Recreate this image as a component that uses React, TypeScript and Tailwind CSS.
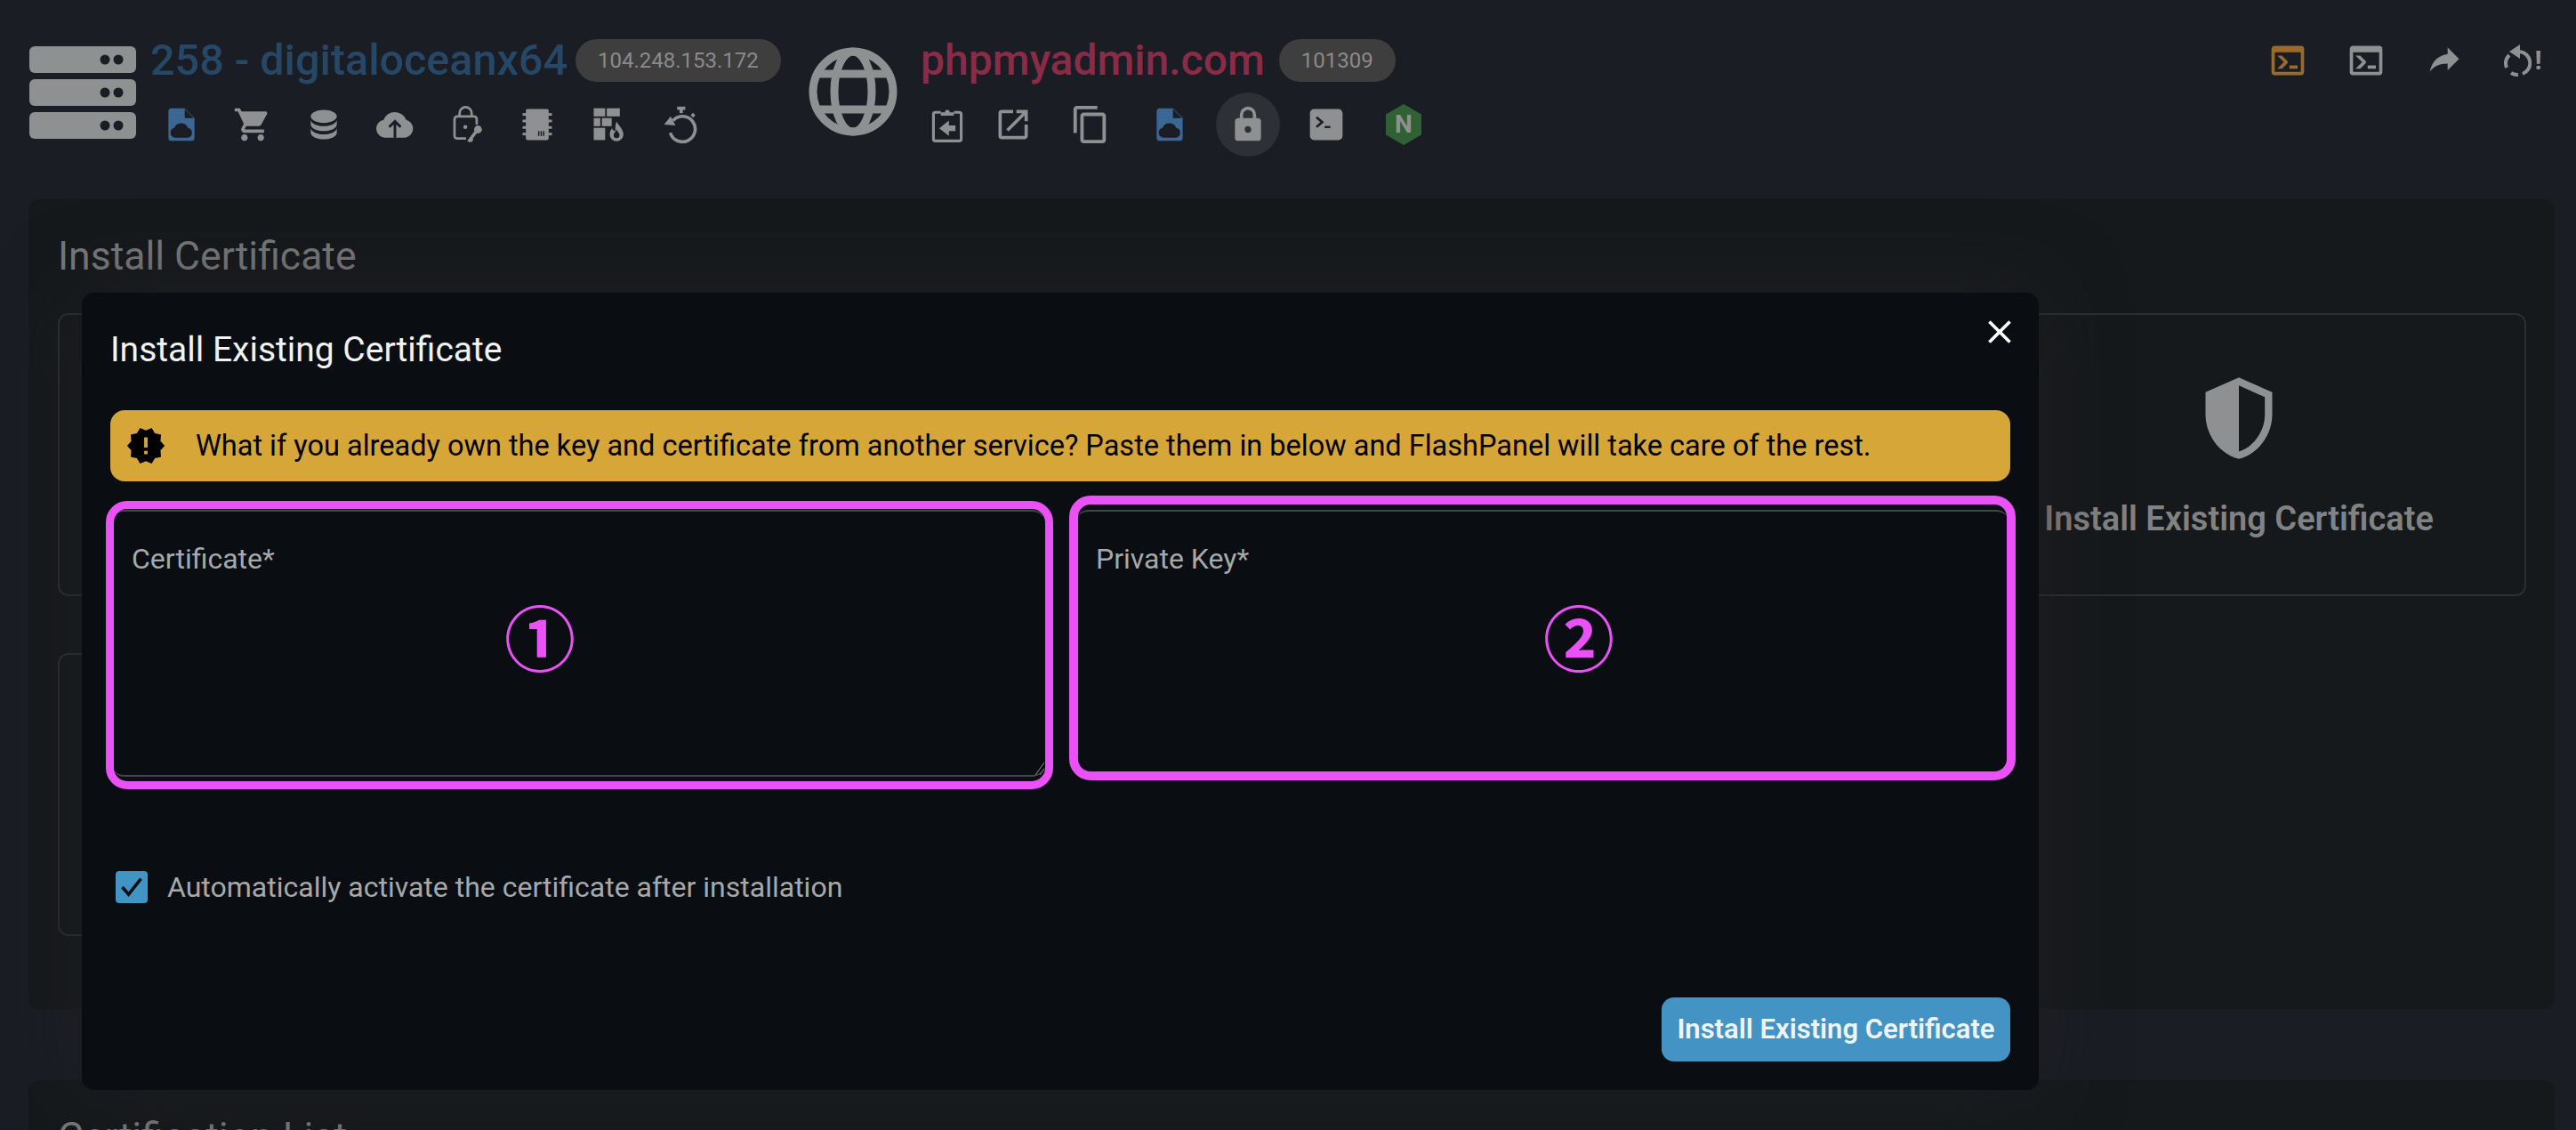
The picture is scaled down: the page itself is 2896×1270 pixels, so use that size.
import React from "react";
import { MdShoppingCart, MdOpenInNew, MdOutlineContentCopy, MdClose } from "react-icons/md";

const GRAY = "#8f9092";

function Mdi({ d, size = 44, color = GRAY }: { d: string; size?: number; color?: string }) {
    return (
        <svg width={size} height={size} viewBox="0 0 24 24" fill={color} fillRule="evenodd">
            <path d={d} />
        </svg>
    );
}

const paths = {
    database:
        "M12,3C7.58,3 4,4.79 4,7C4,9.21 7.58,11 12,11C16.42,11 20,9.21 20,7C20,4.79 16.42,3 12,3M4,9V12C4,14.21 7.58,16 12,16C16.42,16 20,14.21 20,12V9C20,11.21 16.42,13 12,13C7.58,13 4,11.21 4,9M4,14V17C4,19.21 7.58,21 12,21C16.42,21 20,19.21 20,17V14C20,16.21 16.42,18 12,18C7.58,18 4,16.21 4,14Z",
    lock: "M12,17A2,2 0 0,0 14,15C14,13.89 13.1,13 12,13A2,2 0 0,0 10,15A2,2 0 0,0 12,17M18,8A2,2 0 0,1 20,10V20A2,2 0 0,1 18,22H6A2,2 0 0,1 4,20V10C4,8.89 4.9,8 6,8H7V6A5,5 0 0,1 12,1A5,5 0 0,1 17,6V8H18M12,3A3,3 0 0,0 9,6V8H15V6A3,3 0 0,0 12,3Z",
    console:
        "M20,19V7H4V19H20M20,3A2,2 0 0,1 22,5V19A2,2 0 0,1 20,21H4A2,2 0 0,1 2,19V5C2,3.89 2.9,3 4,3H20M13,17V15H18V17H13M9.58,13L5.57,9H8.4L11.7,12.3C12.09,12.69 12.09,13.33 11.7,13.72L8.42,17H5.59L9.58,13Z",
    share: "M21,11L14,4V8C7,9 4,14 3,19C5.5,15.5 9,13.9 14,13.9V18L21,11Z",
    shield: "M21,11C21,16.55 17.16,21.74 12,23C6.84,21.74 3,16.55 3,11V5L12,1L21,5V11M12,21C15.75,20 19,15.54 19,11.22V6.3L12,3.18V21Z",
    decagram:
        "M23,12L20.56,9.22L20.9,5.54L17.29,4.72L15.4,1.54L12,3L8.6,1.54L6.71,4.72L3.1,5.53L3.44,9.21L1,12L3.44,14.78L3.1,18.47L6.71,19.29L8.6,22.47L12,21L15.4,22.46L17.29,19.28L20.9,18.46L20.56,14.78L23,12M13,17H11V15H13V17M13,13H11V7H13V13Z",
};

const IconServer = () => (
    <svg width="120" height="104" viewBox="0 0 120 104" fill={GRAY}>
        {[0, 37, 74].map((y) => (
            <g key={y}>
                <rect x="0" y={y} width="120" height="30" rx="6" />
                <circle cx="85" cy={y + 15} r="5.5" fill="#1a1d24" />
                <circle cx="100" cy={y + 15} r="5.5" fill="#1a1d24" />
            </g>
        ))}
    </svg>
);

const IconGlobe = () => (
    <svg width="100" height="100" viewBox="0 0 100 100" fill="none" stroke={GRAY} strokeWidth="9">
        <circle cx="50" cy="50" r="45" />
        <ellipse cx="50" cy="50" rx="21" ry="45" />
        <path d="M8 30H92M8 70H92" />
    </svg>
);

const IconFileCloud = () => (
    <svg width="44" height="44" viewBox="0 0 24 24" fill="#3c6794">
        <path d="M6 2h8l6 6v12a2 2 0 0 1-2 2H6a2 2 0 0 1-2-2V4a2 2 0 0 1 2-2z" />
        <path d="M14 2.5V8h5.5z" fill="#1a1d24" />
        <path
            d="M8 20a3 3 0 0 1-.4-5.9A4.5 4.5 0 0 1 16 14.1 3 3 0 0 1 16 20z"
            fill="#1a1d24"
        />
    </svg>
);

const IconCloudUp = () => (
    <svg width="44" height="44" viewBox="0 0 24 24">
        <path
            fill={GRAY}
            d="M6 20a5.5 5.5 0 0 1-1-10.9A7.5 7.5 0 0 1 19 9.2 5.5 5.5 0 0 1 18 20z"
        />
        <path d="M12 20v-9M8.5 13.5 12 10l3.5 3.5" stroke="#1a1d24" strokeWidth="1.6" fill="none" />
    </svg>
);

const IconLockKey = () => (
    <svg width="44" height="44" viewBox="0 0 24 24" fill="none" stroke={GRAY} strokeWidth="1.5">
        <path d="M8 7V5a3.7 3.7 0 0 1 7.4 0v2" />
        <path d="M12 20.5H6.5a1.6 1.6 0 0 1-1.6-1.6V8.6A1.6 1.6 0 0 1 6.5 7h10.4a1.6 1.6 0 0 1 1.6 1.6v3.4" />
        <circle cx="11.5" cy="13.5" r="1.2" fill={GRAY} stroke="none" />
        <circle cx="19.3" cy="15" r="2.4" fill={GRAY} stroke="none" />
        <path d="M18 16.5 13.5 22.5M14.5 21l1.5 1" strokeWidth="2" />
    </svg>
);

const IconChip = () => (
    <svg width="44" height="44" viewBox="0 0 24 24" fill={GRAY}>
        <rect x="5" y="2.5" width="14" height="19" rx="1" />
        {[5, 9, 13, 17].map((y) => (
            <g key={y}>
                <rect x="3" y={y} width="18" height="1.6" />
            </g>
        ))}
        <rect x="12.5" y="16" width="0.8" height="3" fill="#1a1d24" />
        <rect x="14" y="16" width="0.8" height="3" fill="#1a1d24" />
        <rect x="15.5" y="16" width="0.8" height="3" fill="#1a1d24" />
    </svg>
);

const IconFirewall = () => (
    <svg width="44" height="44" viewBox="0 0 24 24" fill={GRAY}>
        <rect x="3" y="2" width="7" height="5" />
        <rect x="11" y="2" width="8" height="5" />
        <rect x="3" y="8" width="4" height="5" />
        <rect x="8" y="8" width="6" height="5" />
        <rect x="3" y="14" width="7" height="7.5" />
        <path
            d="M17 9c.4 2.6 4.6 5 4.6 9a4.6 4.6 0 0 1-9.2 0c0-2 1-3.5 2-4.5.2 1.2.8 1.8 1.4 2C15.5 13 16 11 17 9z"
            stroke="#1a1d24"
            strokeWidth="0.8"
        />
        <path d="M17 15c.3 1.2 1.8 2 1.8 3.5a1.8 1.8 0 0 1-3.6 0c0-1.5 1.4-2 1.8-3.5z" fill="#1a1d24" />
    </svg>
);

const IconTimer = () => (
    <svg width="44" height="44" viewBox="0 0 24 24" fill="none" stroke={GRAY} strokeWidth="2">
        <path d="M10.5 2h5" />
        <path d="M13 2v3" />
        <path d="M8 9.5A7.8 7.8 0 1 1 6.3 17" />
        <path d="M2.5 12 6.5 7 9.5 12.5z" fill={GRAY} stroke="none" />
        <path d="M19.5 5.5l1.5 1.5" />
    </svg>
);

const IconClipboardBack = () => (
    <svg width="44" height="44" viewBox="0 0 24 24" fill="none" stroke={GRAY} strokeWidth="1.7">
        <path d="M8 4.5H4.7A1.2 1.2 0 0 0 3.5 5.7v15.1A1.2 1.2 0 0 0 4.7 22h14.6a1.2 1.2 0 0 0 1.2-1.2V5.7a1.2 1.2 0 0 0-1.2-1.2H16" />
        <path d="M8 6.5V4.5h2.5a1.5 1.5 0 0 1 3 0H16v2z" fill={GRAY} stroke="none" />
        <path d="M13 9.5v3h4V16h-4v3l-6-4.75z" fill={GRAY} stroke="none" />
    </svg>
);

const IconConsoleBox = () => (
    <svg width="44" height="44" viewBox="0 0 24 24">
        <rect x="2" y="2.5" width="20" height="19" rx="2.5" fill={GRAY} />
        <path d="M6 7.5 9.5 10.5 6 13.5" stroke="#1a1d24" strokeWidth="1.5" fill="none" />
        <path d="M11 13.5h3.5" stroke="#1a1d24" strokeWidth="1.3" />
    </svg>
);

const IconNginx = () => (
    <div className="relative flex h-[46px] w-[40px] items-center justify-center">
        <svg width="40" height="46" viewBox="0 0 40 46" className="absolute inset-0">
            <path d="M20 0 40 11.5V34.5L20 46 0 34.5V11.5z" fill="#2f6134" />
        </svg>
        <span className="relative text-[28px] font-bold leading-none text-[#8f9092]">N</span>
    </div>
);

const IconRestartAlert = () => (
    <div className="flex items-center">
        <svg width="32" height="36" viewBox="0 0 32 36" fill="none" stroke={GRAY} strokeWidth="4">
            <path d="M7 12a13 13 0 0 0-3 14" />
            <path d="M9 32a13 13 0 0 0 8 2" />
            <path d="M22 33a13 13 0 0 0-3-25" />
            <path d="M19 0v16L7 8z" fill={GRAY} stroke="none" />
        </svg>
        <span className="ml-[3px] text-[30px] font-bold leading-none text-[#8f9092]">!</span>
    </div>
);

function IconBox({ children, className }: { children: React.ReactNode; className: string }) {
    return <div className={`flex h-[72px] items-center justify-center ${className}`}>{children}</div>;
}

function Chip({ text }: { text: string }) {
    return (
        <span className="flex h-[48px] items-center rounded-full bg-[#3e3e3e] px-[25px] text-[24px] text-[#8b8b8b]">
            {text}
        </span>
    );
}

function Panel({ title, children, className }: { title: string; children?: React.ReactNode; className: string }) {
    return (
        <section className={`rounded-[12px] bg-[#16191c] px-[32px] pt-[38px] ${className}`}>
            <h2 className="ml-px h-[52px] text-[44.5px] font-normal leading-[52px] text-[#76787a]">{title}</h2>
            {children}
        </section>
    );
}

function Card({ children }: { children?: React.ReactNode }) {
    return (
        <div className="flex h-[318px] flex-col items-center rounded-[12px] border-2 border-[#2c2e31]">{children}</div>
    );
}

function Field({ label }: { label: string }) {
    return (
        <div className="h-[300px] rounded-[16px] border-y-2 border-[#42474a] px-[24px] pt-[35px]">
            <label className="text-[32px] leading-[36px] text-[#a6a9a9]">{label}</label>
        </div>
    );
}

function Modal() {
    return (
        <div className="absolute left-[92px] top-[329px] h-[896px] w-[2200px] rounded-[14px] bg-[#0a0e12] px-[32px] pt-[32px] shadow-[0_0_90px_rgba(38,34,34,0.5)]">
            <div className="flex h-[64px] items-center">
                <h3 className="text-[39px] font-normal text-[#f1f2f2]">Install Existing Certificate</h3>
            </div>
            <button className="absolute right-[22px] top-[22px] text-white">
                <MdClose size={44} />
            </button>

            <div className="mt-[36px] flex h-[80px] items-center rounded-[16px] bg-[#d6a639] pl-[17px]">
                <Mdi d={paths.decagram} size={46} color="#000000" />
                <span className="ml-[33px] text-[32.5px] text-black">
                    What if you already own the key and certificate from another service? Paste them in below and
                    FlashPanel will take care of the rest.
                </span>
            </div>

            <div className="mt-[32px] grid grid-cols-2 gap-[32px]">
                <div className="relative">
                    <Field label="Certificate*" />
                    <svg width="10" height="14" viewBox="0 0 10 14" className="absolute bottom-[2px] right-[2px]" stroke="#8c8f90" fill="none">
                        <path d="M0 14 10 0M5 14 10 7" />
                    </svg>
                </div>
                <Field label="Private Key*" />
            </div>

            <div className="mt-[106px] flex h-[36px] items-center">
                <span className="ml-[6px] flex h-[36px] w-[36px] items-center justify-center rounded-[4px] bg-[#4195c4]">
                    <svg width="28" height="28" viewBox="0 0 24 24" fill="none" stroke="#0a0e12" strokeWidth="3">
                        <path d="M3 12l6 7L21 4" />
                    </svg>
                </span>
                <span className="ml-[22px] text-[32px] text-[#a6a9a9]">
                    Automatically activate the certificate after installation
                </span>
            </div>

            <div className="mt-[106px] flex justify-end">
                <button className="h-[72px] w-[392px] rounded-[14px] bg-[#4394c4] text-[31px] font-semibold text-[#f1f4f6]">
                    Install Existing Certificate
                </button>
            </div>

            {/* annotations drawn over the screenshot */}
            <div className="absolute left-[27px] top-[234px] h-[324px] w-[1065px] rounded-[24px] border-[9px] border-[#ea52f7]" />
            <div className="absolute left-[1110px] top-[228px] h-[320px] w-[1064px] rounded-[24px] border-[10px] border-[#ea52f7]" />
            <span className="absolute left-[465px] top-[326px] w-[100px] text-center text-[80px] font-bold leading-[116px] text-[#ea52f7] [font-family:'Noto_Sans_CJK_JP',sans-serif]">
                ①
            </span>
            <span className="absolute left-[1633px] top-[326px] w-[100px] text-center text-[80px] font-bold leading-[116px] text-[#ea52f7] [font-family:'Noto_Sans_CJK_JP',sans-serif]">
                ②
            </span>
        </div>
    );
}

export default function App() {
    return (
        <div className="relative h-[1270px] w-[2896px] overflow-hidden bg-[#1a1d24] [font-family:Roboto,sans-serif]">
            <header className="flex h-[224px] items-start pl-[33px] pt-[40px]">
                <div className="mt-[12px]">
                    <IconServer />
                </div>

                <div className="ml-[11px] flex w-[725px] flex-col">
                    <div className="ml-[5px] flex h-[56px] items-center gap-[9px]">
                        <h1 className="text-[48.5px] font-medium text-[#264866]">258 - digitaloceanx64</h1>
                        <Chip text="104.248.153.172" />
                    </div>
                    <div className="mt-[8px] flex">
                        <IconBox className="w-[80px]"><IconFileCloud /></IconBox>
                        <IconBox className="w-[80px]"><MdShoppingCart size={44} color={GRAY} /></IconBox>
                        <IconBox className="w-[80px]"><Mdi d={paths.database} /></IconBox>
                        <IconBox className="w-[80px]"><IconCloudUp /></IconBox>
                        <IconBox className="w-[80px]"><IconLockKey /></IconBox>
                        <IconBox className="w-[80px]"><IconChip /></IconBox>
                        <IconBox className="w-[80px]"><IconFirewall /></IconBox>
                        <IconBox className="w-[80px]"><IconTimer /></IconBox>
                    </div>
                </div>

                <div className="ml-[20px] mt-[13px]">
                    <IconGlobe />
                </div>

                <div className="ml-[26px] flex flex-col">
                    <div className="flex h-[56px] items-center gap-[16px]">
                        <h1 className="text-[48px] font-medium text-[#8a2b47]">phpmyadmin.com</h1>
                        <Chip text="101309" />
                    </div>
                    <div className="mt-[8px] flex">
                        <IconBox className="w-[60px]"><IconClipboardBack /></IconBox>
                        <IconBox className="w-[88px]"><MdOpenInNew size={44} color={GRAY} /></IconBox>
                        <IconBox className="w-[86px]"><MdOutlineContentCopy size={46} color={GRAY} /></IconBox>
                        <IconBox className="w-[92px]"><IconFileCloud /></IconBox>
                        <IconBox className="w-[84px]">
                            <div className="flex h-[72px] w-[72px] items-center justify-center rounded-full bg-[#2d3035]">
                                <Mdi d={paths.lock} />
                            </div>
                        </IconBox>
                        <IconBox className="w-[92px]"><IconConsoleBox /></IconBox>
                        <IconBox className="w-[82px]"><IconNginx /></IconBox>
                    </div>
                </div>

                <div className="ml-auto mr-[16px] flex h-[56px] items-center">
                    <IconBox className="w-[88px]"><Mdi d={paths.console} color="#9a6a2c" /></IconBox>
                    <IconBox className="w-[88px]"><Mdi d={paths.console} /></IconBox>
                    <IconBox className="w-[88px]"><Mdi d={paths.share} /></IconBox>
                    <IconBox className="w-[88px]"><IconRestartAlert /></IconBox>
                </div>
            </header>

            <main className="flex flex-col gap-[80px] pl-[32px] pr-[24px]">
                <Panel title="Install Certificate" className="h-[910px]">
                    <div className="ml-px mt-[38px] grid grid-cols-4 gap-[64px]">
                        <Card />
                        <Card />
                        <Card />
                        <Card>
                            <div className="mt-[66px]">
                                <Mdi d={paths.shield} size={100} />
                            </div>
                            <span className="mt-[35px] text-[38px] font-semibold text-[#808284]">
                                Install Existing Certificate
                            </span>
                        </Card>
                        <Card />
                    </div>
                </Panel>
                <Panel title="Certification List" className="h-[300px]" />
            </main>

            <Modal />
        </div>
    );
}
